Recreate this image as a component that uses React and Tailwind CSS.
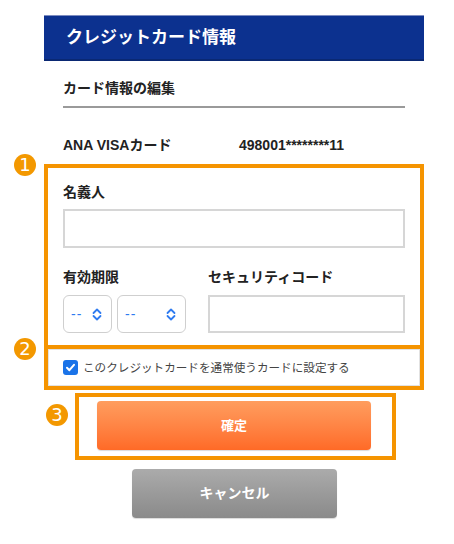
import React from "react";

const jp = { fontFamily: '"Liberation Sans", "Noto Sans CJK JP", sans-serif' };

function Chevron() {
  return (
    <svg width="10" height="13" viewBox="0 0 10 13" fill="none" stroke="#2f7bf0" strokeWidth="1.8" strokeLinecap="round" strokeLinejoin="round">
      <path d="M1.5 5 L5 1.5 L8.5 5" />
      <path d="M1.5 8 L5 11.5 L8.5 8" />
    </svg>
  );
}

function Badge({ n, className }) {
  return (
    <div className={"absolute w-[22px] h-[22px] rounded-full bg-[#f39800] text-white flex items-center justify-center text-[18px] leading-none " + className} style={{ fontFamily: '"DejaVu Sans", sans-serif' }}>
      {n}
    </div>
  );
}

export default function App() {
  return (
    <div className="relative w-[454px] h-[544px] bg-white" style={jp}>
      <Badge n="1" className="left-[14px] top-[154px]" />
      <Badge n="2" className="left-[14px] top-[338px]" />
      <Badge n="3" className="left-[46px] top-[404px]" />

      <div className="ml-[44px] w-[380px] pt-[15px] flex flex-col">
        <div className="h-[46px] bg-[#0c318f] border-t border-[#7d8cc0] border-b-2 border-b-[#0a2873] flex items-center pl-[22px]">
          <span className="text-white text-[17px] font-bold">クレジットカード情報</span>
        </div>

        <div className="mt-[9px] h-[36px] flex items-center pl-[19px] text-[14px] font-bold text-[#222]">
          カード情報の編集
        </div>
        <div className="mx-[19px] h-[2px] bg-[#9a9a9a]" />

        <div className="mt-[21px] h-[32px] flex items-center pl-[19px] text-[14px] font-bold text-[#222]">
          <span className="w-[176px]">ANA VISAカード</span>
          <span>498001********11</span>
        </div>

        <div className="mt-[3px] border-4 border-[#f59400] px-[15px] pt-[12px] pb-[12px]">
          <div className="h-[24px] flex items-center text-[14px] font-bold text-[#222]">名義人</div>
          <div className="mt-[5px] h-[39px] border-2 border-[#d6d6d6] bg-white" />
          <div className="mt-[17px] flex">
            <div className="w-[145px] flex flex-col">
              <div className="h-[24px] flex items-center text-[14px] font-bold text-[#222]">有効期限</div>
              <div className="mt-[6px] flex gap-[5px]">
                <div className="w-[49px] h-[38px] rounded-md border border-[#cfcfcf] flex items-center justify-between pl-[7px] pr-[9px]">
                  <span className="text-[#2f7bf0] text-[14px] tracking-[1px]">--</span>
                  <Chevron />
                </div>
                <div className="w-[69px] h-[38px] rounded-md border border-[#cfcfcf] flex items-center justify-between pl-[7px] pr-[9px]">
                  <span className="text-[#2f7bf0] text-[14px] tracking-[1px]">--</span>
                  <Chevron />
                </div>
              </div>
            </div>
            <div className="flex-1 flex flex-col">
              <div className="h-[24px] flex items-center text-[14px] font-bold text-[#222]">セキュリティコード</div>
              <div className="mt-[6px] h-[38px] border-2 border-[#d6d6d6] bg-white" />
            </div>
          </div>
        </div>

        <div className="border-4 border-t-0 border-[#f59400]">
          <div className="h-[37px] border border-[#e2e2e2] flex items-center pl-[14px] gap-[5px]">
            <div className="w-[15px] h-[15px] rounded-[3px] bg-[#1a73e8] flex items-center justify-center">
              <svg width="11" height="11" viewBox="0 0 11 11" fill="none" stroke="white" strokeWidth="2" strokeLinecap="round" strokeLinejoin="round">
                <path d="M2 5.8 L4.4 8.2 L9 2.8" />
              </svg>
            </div>
            <span className="text-[11.6px] text-[#444]">このクレジットカードを通常使うカードに設定する</span>
          </div>
        </div>

        <div className="mt-[3px] ml-[31px] w-[321px] h-[67px] border-4 border-[#f59400] pl-[18px] pt-[4px]">
          <div className="w-[274px] h-[49px] rounded-[4px] bg-gradient-to-b from-[#ff9d5e] to-[#ff6a26] flex items-center justify-center text-white text-[13px] font-bold shadow-[0_1px_1px_rgba(0,0,0,0.15)]">
            確定
          </div>
        </div>

        <div className="mt-[9px] ml-[88px] w-[205px] h-[49px] rounded-[4px] bg-gradient-to-b from-[#ababab] to-[#8a8a8a] flex items-center justify-center text-white text-[14px] font-bold shadow-[0_1px_1px_rgba(0,0,0,0.15)]">
          キャンセル
        </div>
      </div>
    </div>
  );
}
